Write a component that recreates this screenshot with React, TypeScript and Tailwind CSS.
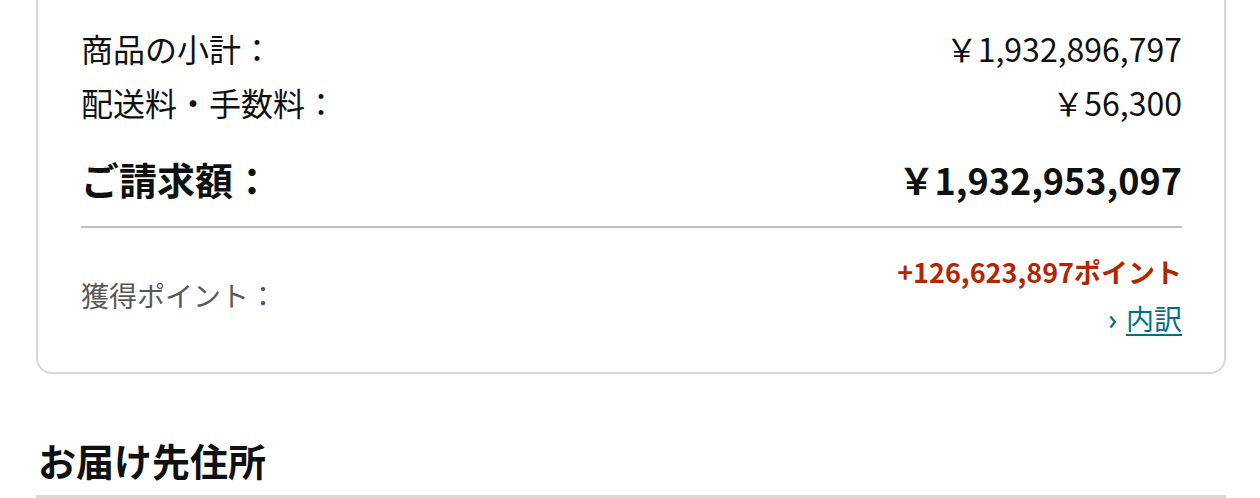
export default function App() {
  return (
    <div className="min-h-screen w-full bg-white font-['Noto_Sans_CJK_JP','Noto_Sans',sans-serif] text-[#0f1111]">
      <div className="ml-[36px] mr-[34px] rounded-b-[16px] border-x-2 border-b-2 border-[#d5d9d9] pl-[43px] pr-[42px] pb-[33px]">
        <div className="flex flex-col pt-[26px]">
          <div className="flex items-center justify-between text-[32px] leading-[44px]">
            <span>商品の小計：</span>
            <span>￥1,932,896,797</span>
          </div>
          <div className="mt-[10px] flex items-center justify-between text-[32px] leading-[44px]">
            <span>配送料・手数料：</span>
            <span>￥56,300</span>
          </div>
          <div className="mt-[30px] flex items-center justify-between font-bold leading-[50px]">
            <span className="text-[38px]">ご請求額：</span>
            <span className="text-[36px]">￥1,932,953,097</span>
          </div>
        </div>
        <div className="mt-[22px] h-[2px] bg-[#bbbfbf]" />
        <div className="mt-[23px] flex items-center justify-between">
          <span className="text-[28px] text-[#565959]">獲得ポイント：</span>
          <div className="flex flex-col items-end">
            <span className="text-[27px] font-bold leading-[42px] text-[#b12704]">+126,623,897ポイント</span>
            <a href="#" className="mt-[4px] flex items-center gap-[9px] text-[28px] leading-[42px] text-[#007185]">
              <svg width="8" height="14" viewBox="0 0 8 14" className="mt-[7px]">
                <path d="M1.5 1.5 L6 7 L1.5 12.5" fill="none" stroke="#007185" strokeWidth="2.2" />
              </svg>
              <span className="underline underline-offset-4">内訳</span>
            </a>
          </div>
        </div>
      </div>
      <div className="ml-[36px] mr-[34px] mt-[58px]">
        <h2 className="pl-[2px] text-[38px] font-bold leading-[56px]">お届け先住所</h2>
        <div className="mt-[7px] h-[4px] bg-[#d5d9d9]" />
      </div>
    </div>
  );
}
